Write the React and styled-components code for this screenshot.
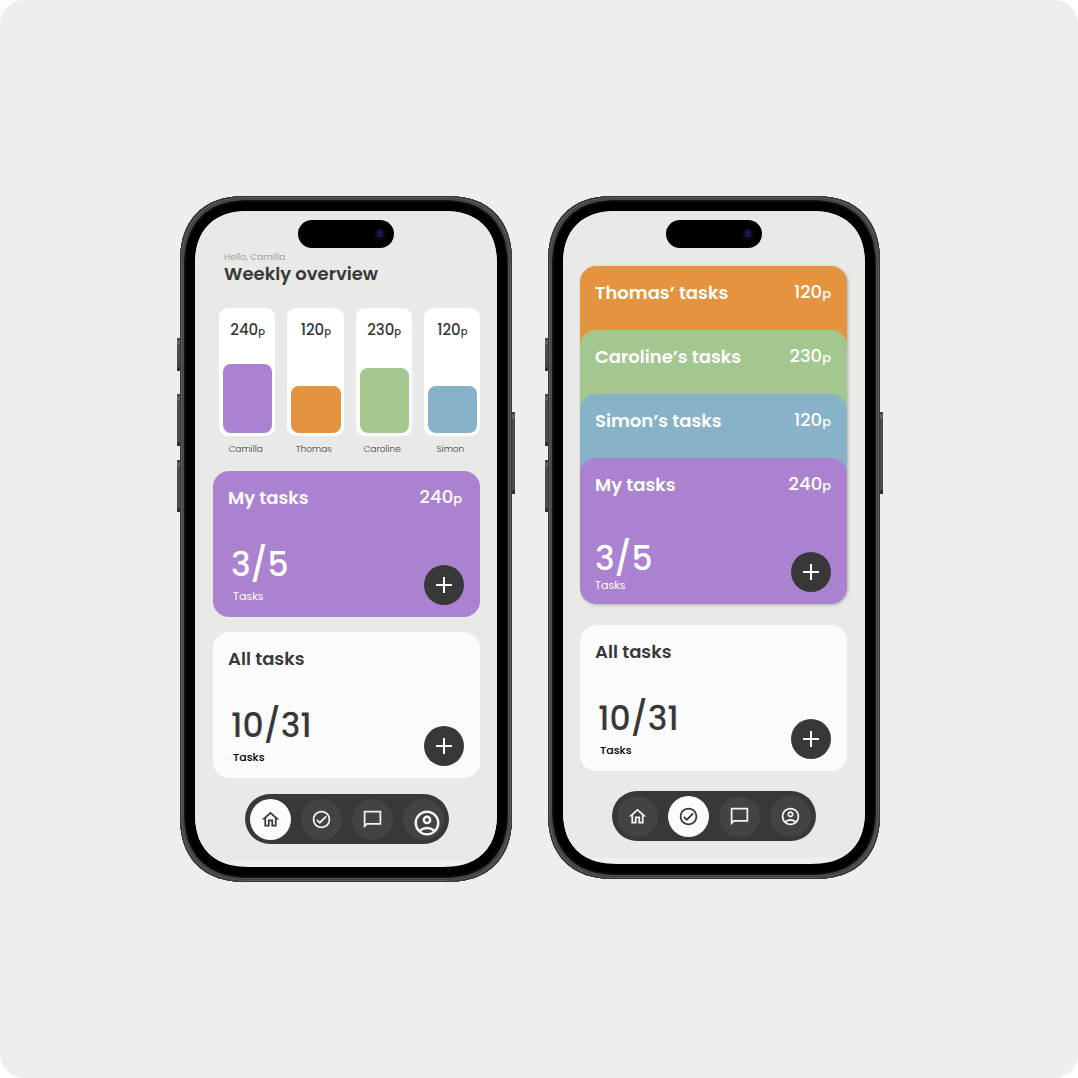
import React from "react";
import styled, { createGlobalStyle, css } from "styled-components";

const c = {
  page: "#eeeeee",
  screen: "#e9e9e7",
  ink: "#383838",
  paper: "#fbfbfb",
  purple: "#ab82d0",
  orange: "#e4933f",
  green: "#a4c78f",
  blue: "#87b2c7",
};

const GlobalStyle = createGlobalStyle`
  *, *::before, *::after { box-sizing: border-box; }
  body {
    margin: 0;
    background: #ffffff;
    color: ${c.ink};
    font-family: Poppins, Inter, "Open Sans", sans-serif;
    -webkit-font-smoothing: antialiased;
  }
  h1, h2, p, ul, dl, dd { margin: 0; padding: 0; }
  button { font: inherit; border: 0; padding: 0; cursor: pointer; }
`;

const Stage = styled.main`
  min-height: 100vh;
  padding: 24px 18px 24px 0;
  border-radius: 24px;
  background: ${c.page};
  display: flex;
  align-items: center;
  justify-content: center;
`;

const Devices = styled.div`
  display: flex;
  flex-wrap: wrap;
  align-items: flex-start;
  justify-content: center;
  gap: 36px;
`;

/* Continuous corners where the browser has them, plain round ones elsewhere. */
const deviceCorner = (round, smooth) => css`
  border-radius: ${round}px;

  @supports (corner-shape: superellipse(1.25)) {
    border-radius: ${smooth}px;
    corner-shape: superellipse(1.25);
  }
`;

const Frame = styled.section`
  position: relative;
  width: 332px;
  max-width: 100%;
  padding: 15px;
  ${deviceCorner(59, 67)}
  background: #000000;
  box-shadow:
    inset 0 0 0 1px #343535,
    inset 0 0 0 2px #5b5d5c,
    inset 0 0 0 3px #424343,
    inset 0 0 0 4px #4b4c4c,
    inset 0 0 2px 5px #1c1c1c;
`;

const SideKey = styled.span`
  position: absolute;
  top: ${(p) => p.$top}px;
  ${(p) => p.$side}: -3px;
  width: 3px;
  height: ${(p) => p.$length}px;
  border-radius: 1px;
  background: linear-gradient(#222222, #6d6e6e 4px, #4a4b4b 8px, #4a4b4b calc(100% - 5px), #161616);
`;

const Screen = styled.div`
  position: relative;
  padding-bottom: 6px;
  ${deviceCorner(46, 54)}
  overflow: hidden;
  background: #efefef;
`;

const Island = styled.div`
  position: absolute;
  top: 9px;
  left: 50%;
  width: 96px;
  height: 28px;
  margin-left: -48px;
  padding-right: 8px;
  border-radius: 14px;
  background: #000000;
  display: flex;
  align-items: center;
  justify-content: flex-end;
`;

const View = styled.div`
  display: flex;
  flex-direction: column;
  padding: ${(p) => p.$top}px ${(p) => p.$right}px 17px ${(p) => p.$left}px;
  background: ${c.screen};
`;

const Greeting = styled.header`
  padding-left: 11px;
`;

const Hello = styled.p`
  font-size: 9px;
  line-height: 12px;
  color: #a3a3a1;
`;

const Title = styled.h1`
  font-size: 18px;
  line-height: 22px;
  font-weight: 600;
`;

const Chart = styled.ul`
  list-style: none;
  display: grid;
  grid-template-columns: repeat(4, 1fr);
  gap: 12px;
  margin: 23px 0 15px;
  padding: 0 0 0 6px;
`;

const Column = styled.li`
  display: flex;
  flex-direction: column;
  gap: 6px;
`;

const Track = styled.div`
  height: 128px;
  padding: 12px 3px 3px 4px;
  border-radius: 9px;
  background: #ffffff;
  display: flex;
  flex-direction: column;
  justify-content: space-between;
`;

const Bar = styled.div`
  border-radius: 8px;
  background: ${(p) => p.$color};
`;

const Person = styled.span`
  padding-right: 3px;
  text-align: center;
  font-size: 9px;
  line-height: 14px;
  font-weight: 300;
  color: #3c3c3c;
`;

const Points = styled.span`
  font-size: ${(p) => (p.$small ? 15 : 18)}px;
  line-height: 20px;
  font-weight: 500;
  text-align: center;
  white-space: nowrap;

  small {
    font-size: ${(p) => (p.$small ? 10 : 13)}px;
  }
`;

const Cards = styled.div`
  display: flex;
  flex-direction: column;
  gap: ${(p) => p.$gap}px;
`;

const Stack = styled.div`
  border-radius: 16px;
  box-shadow: 1px 1px 3px rgba(0, 0, 0, 0.25);
`;

const Card = styled.article`
  height: ${(p) => (p.$folded ? 80 : 146)}px;
  padding: 16px 16px 12px 15px;
  border-radius: 16px;
  background: ${(p) => p.$color};
  color: ${(p) => (p.$dark ? c.ink : "#ffffff")};
  display: flex;
  flex-direction: column;
  justify-content: space-between;
  ${(p) => p.$folded && css`
    margin-bottom: -16px;
    border-radius: 16px 16px 0 0;
  `}
`;

const CardHead = styled.div`
  display: flex;
  align-items: center;
  justify-content: space-between;
  padding-right: ${(p) => (p.$inset ? 2 : 0)}px;
`;

const CardTitle = styled.h2`
  font-size: 18px;
  line-height: 22px;
  font-weight: 600;
`;

const CardFoot = styled.div`
  display: flex;
  align-items: flex-end;
  justify-content: space-between;
`;

const Tally = styled.dl`
  display: flex;
  flex-direction: column-reverse;
  gap: ${(p) => (p.$flush ? 1 : 6)}px;
  padding: ${(p) => (p.$flush ? "0" : "0 0 2px 3px")};
`;

const Count = styled.dd`
  font-size: 33px;
  line-height: 36px;
  font-weight: 500;
`;

const Unit = styled.dt`
  padding-left: ${(p) => (p.$flush ? 0 : 2)}px;
  font-size: 11px;
  line-height: 14px;
  font-weight: ${(p) => (p.$dark ? 500 : 400)};
  color: ${(p) => (p.$dark ? "#000000" : "inherit")};
`;

const AddButton = styled.button`
  width: 40px;
  height: 40px;
  border-radius: 50%;
  background: ${c.ink};
  color: #ffffff;
  display: grid;
  place-items: center;
`;

const Dock = styled.nav`
  align-self: center;
  display: flex;
  align-items: center;
  gap: 10px;
  height: 50px;
  margin-top: ${(p) => p.$gap}px;
  padding: 0 5px;
  border-radius: 25px;
  background: ${c.ink};
`;

const DockButton = styled.button`
  width: 41px;
  height: 41px;
  padding: ${(p) => (p.$large ? "8px 0 0 8px" : "0")};
  border-radius: 50%;
  background: ${(p) => (p.$active ? c.paper : "#434343")};
  color: ${(p) => (p.$active ? c.ink : "#f4f4f4")};
  display: flex;
  align-items: center;
  justify-content: center;

  svg {
    flex: none;
  }
`;

const glyphs = {
  Home: "M12 5.69l5 4.5V18h-2v-6H9v6H7v-7.81l5-4.5M12 3L2 12h3v8h6v-6h2v6h6v-8h3L12 3z",
  Tasks:
    "M12 2C6.48 2 2 6.48 2 12s4.48 10 10 10 10-4.48 10-10S17.52 2 12 2zm0 18c-4.41 0-8-3.59-8-8s3.59-8 8-8 8 3.59 8 8-3.59 8-8 8zm4.59-12.42L10 14.17l-2.59-2.58L6 13l4 4 8-8-1.41-1.42z",
  Messages:
    "M22 2H2v20l4-4h16V2zM20 16H5.17L4 17.17V4h16v12z",
  Profile:
    "M12 2C6.48 2 2 6.48 2 12s4.48 10 10 10 10-4.48 10-10S17.52 2 12 2zM7.35 18.5C8.66 17.56 10.26 17 12 17s3.34.56 4.65 1.5c-1.31.94-2.91 1.5-4.65 1.5s-3.34-.56-4.65-1.5zm10.79-1.38a9.947 9.947 0 0 0-12.28 0A7.957 7.957 0 0 1 4 12c0-4.42 3.58-8 8-8s8 3.58 8 8c0 1.95-.7 3.73-1.86 5.12zM12 6c-1.93 0-3.5 1.57-3.5 3.5S10.07 13 12 13s3.5-1.57 3.5-3.5S13.93 6 12 6zm0 5c-.83 0-1.5-.67-1.5-1.5S11.17 8 12 8s1.5.67 1.5 1.5S12.83 11 12 11z",
};

function Glyph({ name, size }) {
  return (
    <svg width={size} height={size} viewBox="0 0 24 24" fill="currentColor" fillRule="evenodd" aria-hidden="true">
      <path d={glyphs[name]} />
    </svg>
  );
}

function Score({ value, small }) {
  return (
    <Points $small={small}>
      {value}
      <small>p</small>
    </Points>
  );
}

function Phone({ label, children }) {
  return (
    <Frame aria-label={label}>
      <SideKey $side="left" $top={142} $length={33} />
      <SideKey $side="left" $top={198} $length={52} />
      <SideKey $side="left" $top={264} $length={52} />
      <SideKey $side="right" $top={216} $length={82} />
      <Screen>
        {children}
        <Island>
          <svg width="12" height="12" viewBox="0 0 12 12" aria-hidden="true">
            <circle cx="6" cy="6" r="6" fill="#0b060f" />
            <circle cx="6" cy="6" r="4" fill="#11133a" />
            <circle cx="6" cy="4.6" r="1" fill="#2c3f86" />
            <circle cx="6" cy="7.6" r="1" fill="#22306e" />
          </svg>
        </Island>
      </Screen>
    </Frame>
  );
}

function TaskCard({ title, points, done, color, dark, folded, flush, inset }) {
  return (
    <Card $color={color} $dark={dark} $folded={folded}>
      <CardHead $inset={inset}>
        <CardTitle>{title}</CardTitle>
        {points && <Score value={points} />}
      </CardHead>
      {done && (
        <CardFoot>
          <Tally $flush={flush}>
            <Unit $dark={dark} $flush={flush}>Tasks</Unit>
            <Count>{done}</Count>
          </Tally>
          <AddButton type="button" aria-label={`Add to ${title}`}>
            <svg width="16" height="16" viewBox="0 0 16 16" aria-hidden="true">
              <path d="M8 0v16M0 8h16" stroke="currentColor" strokeWidth="2" />
            </svg>
          </AddButton>
        </CardFoot>
      )}
    </Card>
  );
}

function BottomDock({ active, gap, large }) {
  return (
    <Dock $gap={gap} aria-label="Main">
      {Object.keys(glyphs).map((name) => (
        <DockButton
          key={name}
          type="button"
          aria-label={name}
          $active={name === active}
          $large={name === large}
        >
          <Glyph name={name} size={name === large ? 30 : 21} />
        </DockButton>
      ))}
    </Dock>
  );
}

const members = [
  { name: "Camilla", points: 240, height: 69, color: c.purple },
  { name: "Thomas", points: 120, height: 47, color: c.orange },
  { name: "Caroline", points: 230, height: 65, color: c.green },
  { name: "Simon", points: 120, height: 47, color: c.blue },
];

export default function App() {
  return (
    <>
      <GlobalStyle />
      <Stage>
        <Devices>
          <Phone label="Weekly overview">
            <View $top={40} $right={17} $left={18}>
              <Greeting>
                <Hello>Hello, Camilla</Hello>
                <Title>Weekly overview</Title>
              </Greeting>
              <Chart>
                {members.map((m) => (
                  <Column key={m.name}>
                    <Track>
                      <Score value={m.points} small />
                      <Bar $color={m.color} style={{ height: m.height }} />
                    </Track>
                    <Person>{m.name}</Person>
                  </Column>
                ))}
              </Chart>
              <Cards $gap={15}>
                <TaskCard title="My tasks" points={240} done="3/5" color={c.purple} inset />
                <TaskCard title="All tasks" done="10/31" color={c.paper} dark />
              </Cards>
              <BottomDock active="Home" gap={16} large="Profile" />
            </View>
          </Phone>

          <Phone label="Tasks">
            <View $top={55} $right={18} $left={17}>
              <Cards $gap={21}>
                <Stack>
                  <TaskCard title="Thomas’ tasks" points={120} color={c.orange} folded />
                  <TaskCard title="Caroline’s tasks" points={230} color={c.green} folded />
                  <TaskCard title="Simon’s tasks" points={120} color={c.blue} folded />
                  <TaskCard title="My tasks" points={240} done="3/5" color={c.purple} flush />
                </Stack>
                <TaskCard title="All tasks" done="10/31" color={c.paper} dark />
              </Cards>
              <BottomDock active="Tasks" gap={20} />
            </View>
          </Phone>
        </Devices>
      </Stage>
    </>
  );
}
